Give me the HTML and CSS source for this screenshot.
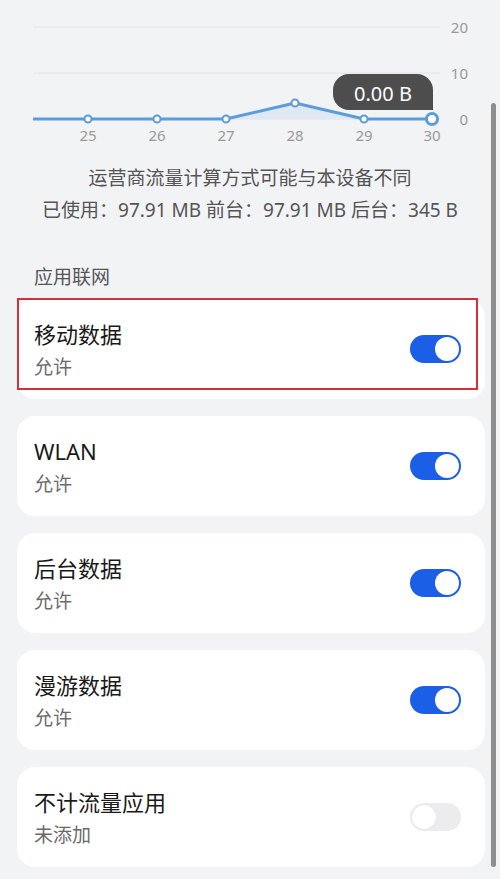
FILE: index.html
```html
<!DOCTYPE html>
<html lang="zh-CN">
<head>
<meta charset="utf-8">
<title>流量管理</title>
<link rel="stylesheet" href="styles.css">
</head>
<body>
<div class="page">
  <div class="scrollbar"></div>
  <svg class="chart" width="500" height="145" viewBox="0 0 500 145">
    <line class="grid" x1="33" y1="27" x2="440" y2="27"/>
    <line class="grid" x1="33" y1="73" x2="440" y2="73"/>
    <line class="grid" x1="33" y1="119" x2="440" y2="119"/>
    <polygon class="area" points="226,119 295,103 364,119"/>
    <polyline class="line" points="33,119 88,119 157,119 226,119 295,103 364,119 432,119"/>
    <circle class="pt" cx="88" cy="119" r="3.5"/>
    <circle class="pt" cx="157" cy="119" r="3.5"/>
    <circle class="pt" cx="226" cy="119" r="3.5"/>
    <circle class="pt" cx="295" cy="103" r="3.5"/>
    <circle class="pt" cx="364" cy="119" r="3.5"/>
    <circle class="pt big" cx="432" cy="119" r="5.5"/>
    <text class="ylab" x="468" y="27">20</text>
    <text class="ylab" x="468" y="73">10</text>
    <text class="ylab" x="468" y="119">0</text>
    <text class="xlab" x="88" y="135">25</text>
    <text class="xlab" x="157" y="135">26</text>
    <text class="xlab" x="226" y="135">27</text>
    <text class="xlab" x="295" y="135">28</text>
    <text class="xlab" x="364" y="135">29</text>
    <text class="xlab" x="432" y="135">30</text>
    <path class="tip" d="M349,74 H417 A16,16 0 0 1 433,90 V110 H349 A16,16 0 0 1 333,94 V90 A16,16 0 0 1 349,74 Z"/>
    <text class="tiptext" x="383" y="93">0.00 B</text>
  </svg>

  <div class="note">
    <div>运营商流量计算方式可能与本设备不同</div>
    <div>已使用：97.91 MB 前台：97.91 MB 后台：345 B</div>
  </div>

  <div class="section-title">应用联网</div>

  <div class="cards">
    <div class="card">
      <div class="highlight"></div>
      <div class="texts">
        <div class="title">移动数据</div>
        <div class="sub">允许</div>
      </div>
      <div class="toggle on"><span class="knob"></span></div>
    </div>
    <div class="card">
      <div class="texts">
        <div class="title">WLAN</div>
        <div class="sub">允许</div>
      </div>
      <div class="toggle on"><span class="knob"></span></div>
    </div>
    <div class="card">
      <div class="texts">
        <div class="title">后台数据</div>
        <div class="sub">允许</div>
      </div>
      <div class="toggle on"><span class="knob"></span></div>
    </div>
    <div class="card">
      <div class="texts">
        <div class="title">漫游数据</div>
        <div class="sub">允许</div>
      </div>
      <div class="toggle on"><span class="knob"></span></div>
    </div>
    <div class="card">
      <div class="texts">
        <div class="title">不计流量应用</div>
        <div class="sub">未添加</div>
      </div>
      <div class="toggle off"><span class="knob"></span></div>
    </div>
  </div>
</div>
</body>
</html>
```

FILE: styles.css
```css
html, body {
  margin: 0;
  padding: 0;
  background: #f2f3f5;
}
body {
  font-family: "Noto Sans", "Noto Sans CJK SC", sans-serif;
  width: 500px;
  height: 879px;
  overflow: hidden;
}
.page {
  position: relative;
  width: 500px;
  height: 879px;
}
.scrollbar {
  position: absolute;
  left: 491px;
  top: 103px;
  width: 5px;
  height: 764px;
  border-radius: 3px;
  background: #8e8e8e;
}
.chart {
  display: block;
}
.grid {
  stroke: #e3e4e7;
  stroke-width: 1;
}
.area {
  fill: #dfe9f5;
}
.line {
  fill: none;
  stroke: #5d9cdb;
  stroke-width: 3;
  stroke-linejoin: round;
}
.pt {
  fill: #ffffff;
  stroke: #5d9cdb;
  stroke-width: 2;
}
.pt.big {
  stroke-width: 3;
}
.ylab {
  font-size: 15px;
  fill: #9a9a9a;
  text-anchor: end;
  dominant-baseline: central;
}
.xlab {
  font-size: 15px;
  fill: #9a9a9a;
  text-anchor: middle;
  dominant-baseline: central;
}
.tip {
  fill: #4d4d4d;
}
.tiptext {
  font-size: 20px;
  fill: #ffffff;
  text-anchor: middle;
  dominant-baseline: central;
}
.note {
  margin-top: 17px;
  text-align: center;
  font-size: 19px;
  line-height: 32px;
  color: #555555;
}
.section-title {
  margin: 38px 0 0 34px;
  font-size: 19px;
  line-height: 26px;
  color: #555555;
}
.cards {
  margin: 9px 15px 0 17px;
  display: flex;
  flex-direction: column;
  gap: 17px;
}
.card {
  position: relative;
  height: 100px;
  background: #ffffff;
  border-radius: 18px;
  display: flex;
  align-items: center;
  justify-content: space-between;
  padding: 0 24px 0 17px;
  box-sizing: border-box;
}
.highlight {
  position: absolute;
  left: 0;
  top: -1px;
  width: 461px;
  height: 92px;
  border: 2px solid #d3303b;
  box-sizing: border-box;
}
.texts {
  align-self: flex-start;
  margin-top: 20px;
  display: flex;
  flex-direction: column;
}
.title {
  font-size: 22px;
  line-height: 30px;
  color: #1a1a1a;
}
.sub {
  margin-top: 3px;
  font-size: 19px;
  line-height: 31px;
  color: #6b6b6b;
}
.toggle {
  width: 51px;
  height: 28px;
  border-radius: 14px;
  box-sizing: border-box;
  padding: 2px;
  display: flex;
}
.toggle.on {
  background: #1b5fe6;
  justify-content: flex-end;
}
.toggle.off {
  background: #ececee;
  justify-content: flex-start;
}
.knob {
  width: 24px;
  height: 24px;
  border-radius: 50%;
  background: #ffffff;
}
.toggle.off .knob {
  box-shadow: 0 0 1px rgba(0,0,0,0.12);
}
```
